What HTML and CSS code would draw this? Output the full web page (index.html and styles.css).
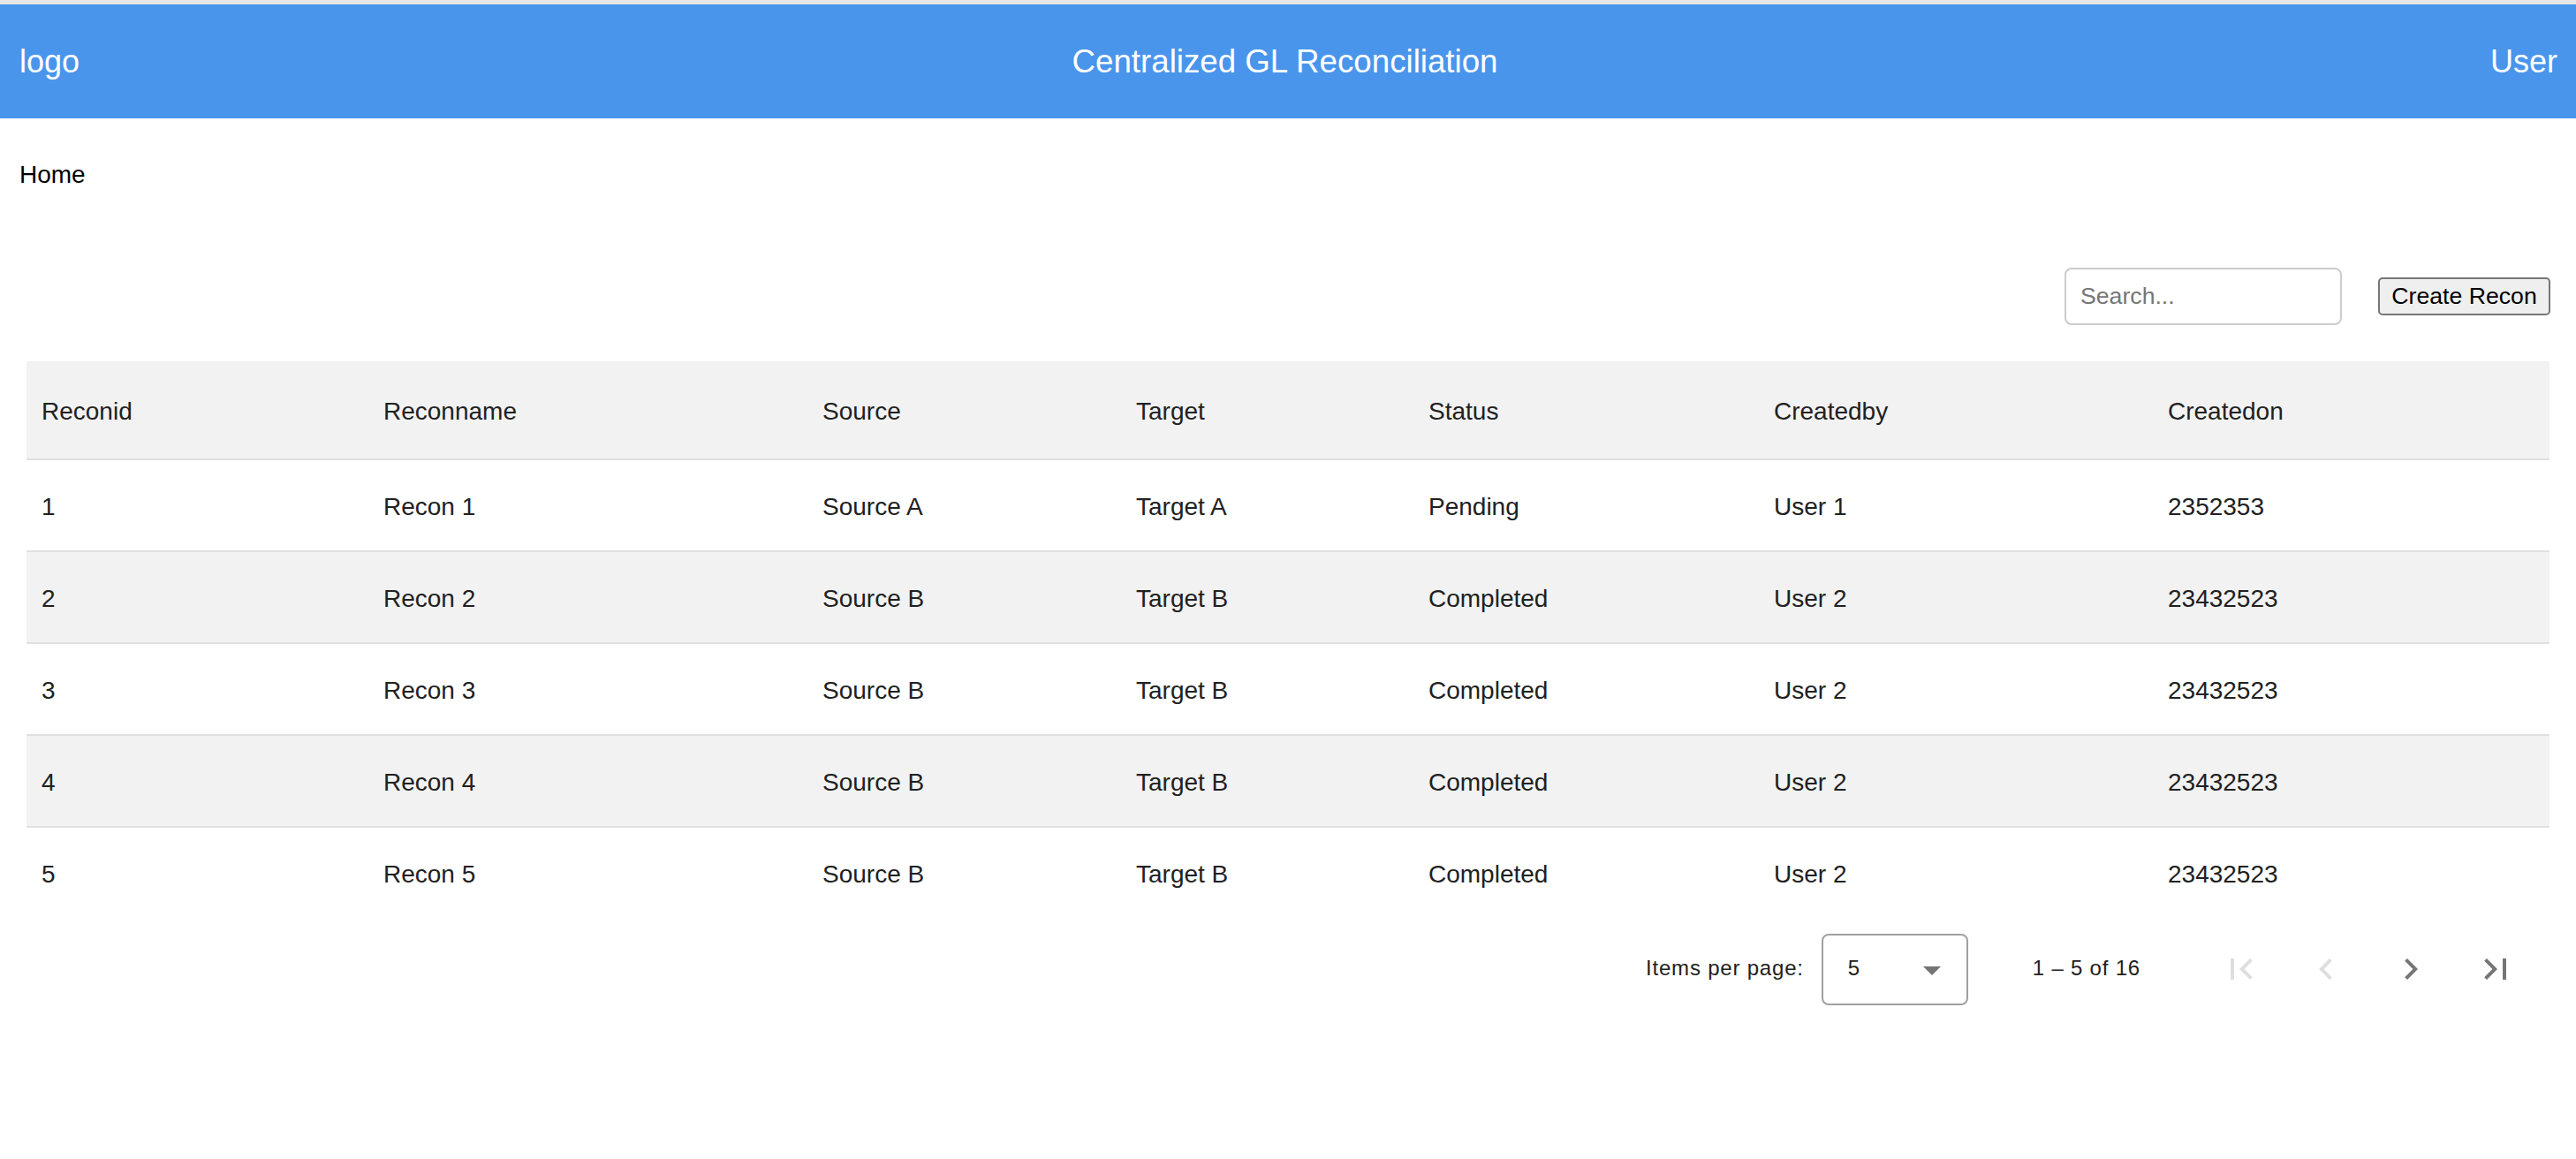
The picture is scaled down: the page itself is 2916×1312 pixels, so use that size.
FILE: index.html
```html
<!DOCTYPE html>
<html lang="en">
<head>
<meta charset="utf-8">
<title>Centralized GL Reconciliation</title>
<link rel="stylesheet" href="styles.css">
</head>
<body>
<header class="topbar">
  <span class="brand">logo</span>
  <span class="title">Centralized GL Reconciliation</span>
  <span class="user">User</span>
</header>
<nav class="crumb">Home</nav>
<div class="toolbar">
  <input class="search" type="text" placeholder="Search...">
  <button class="create" type="button">Create Recon</button>
</div>
<div class="table-wrap">
  <table class="grid">
    <colgroup>
      <col class="c1"><col class="c2"><col class="c3"><col class="c4"><col class="c5"><col class="c6"><col class="c7">
    </colgroup>
    <thead>
      <tr class="head"><th>Reconid</th><th>Reconname</th><th>Source</th><th>Target</th><th>Status</th><th>Createdby</th><th>Createdon</th></tr>
    </thead>
    <tbody>
      <tr><td>1</td><td>Recon 1</td><td>Source A</td><td>Target A</td><td>Pending</td><td>User 1</td><td>2352353</td></tr>
      <tr class="alt"><td>2</td><td>Recon 2</td><td>Source B</td><td>Target B</td><td>Completed</td><td>User 2</td><td>23432523</td></tr>
      <tr><td>3</td><td>Recon 3</td><td>Source B</td><td>Target B</td><td>Completed</td><td>User 2</td><td>23432523</td></tr>
      <tr class="alt"><td>4</td><td>Recon 4</td><td>Source B</td><td>Target B</td><td>Completed</td><td>User 2</td><td>23432523</td></tr>
      <tr class="last"><td>5</td><td>Recon 5</td><td>Source B</td><td>Target B</td><td>Completed</td><td>User 2</td><td>23432523</td></tr>
    </tbody>
  </table>
  <div class="paginator">
    <span class="pg-label">Items per page:</span>
    <div class="pg-select">
      <span class="pg-value">5</span>
      <span class="pg-arrow"></span>
    </div>
    <span class="pg-range">1 – 5 of 16</span>
    <div class="pg-buttons">
      <span class="pg-btn disabled"><svg viewBox="0 0 24 24" width="48" height="48"><path d="M18.41 16.59L13.82 12l4.59-4.59L17 6l-6 6 6 6zM6 6h2v12H6z"/></svg></span>
      <span class="pg-btn disabled"><svg viewBox="0 0 24 24" width="48" height="48"><path d="M15.41 7.41L14 6l-6 6 6 6 1.41-1.41L10.83 12z"/></svg></span>
      <span class="pg-btn"><svg viewBox="0 0 24 24" width="48" height="48"><path d="M10 6L8.59 7.41 13.17 12l-4.58 4.59L10 18l6-6z"/></svg></span>
      <span class="pg-btn"><svg viewBox="0 0 24 24" width="48" height="48"><path d="M5.59 7.41L10.18 12l-4.59 4.59L7 18l6-6-6-6zM16 6h2v12h-2z"/></svg></span>
    </div>
  </div>
</div>
</body>
</html>
```
FILE: styles.css
```css
html, body {
  margin: 0;
  padding: 0;
  background: #ffffff;
}
body {
  border-top: 5px solid #e6e6e6;
  font-family: "Liberation Sans", Arial, Helvetica, sans-serif;
  color: #000;
}
.topbar {
  height: 129px;
  background: #4a95ec;
  color: #ffffff;
  display: flex;
  align-items: center;
  justify-content: space-between;
  padding: 0 21px 0 22px;
  font-size: 36px;
}
.title {
  font-size: 36.7px;
}
.crumb {
  margin-top: 48px;
  padding: 0 22px;
  font-size: 28px;
  line-height: 32px;
}
.toolbar {
  margin-top: 89px;
  display: flex;
  justify-content: flex-end;
  align-items: center;
  gap: 41px;
  padding-right: 29px;
}
.search {
  box-sizing: border-box;
  width: 314px;
  height: 65px;
  border: 2px solid #cccccc;
  border-radius: 8px;
  padding: 0 16px;
  font-family: "Liberation Sans", Arial, sans-serif;
  font-size: 26.67px;
  outline: none;
}
.search::placeholder {
  color: #767676;
}
.create {
  box-sizing: border-box;
  width: 195px;
  height: 43px;
  padding: 0;
  border: 2px solid #767676;
  border-radius: 5px;
  background: #efefef;
  color: #000;
  font-family: "Liberation Sans", Arial, sans-serif;
  font-size: 26.67px;
}
.table-wrap {
  margin: 41px 30px 0 30px;
}
.grid {
  width: 100%;
  table-layout: fixed;
  border-collapse: collapse;
  font-size: 28px;
  color: #212121;
}
.c1 { width: 387px; }
.c2 { width: 497px; }
.c3 { width: 355px; }
.c4 { width: 331px; }
.c5 { width: 391px; }
.c6 { width: 446px; }
.c7 { width: 449px; }
.grid th, .grid td {
  text-align: left;
  font-weight: normal;
  padding: 3px 0 0 17px;
  border-bottom: 2px solid #e0e0e0;
  white-space: nowrap;
}
.grid th {
  height: 107px;
  background: #f2f2f2;
}
.grid td {
  height: 99px;
}
.grid tr.alt td {
  background: #f2f2f2;
}
.grid tr.last td {
  border-bottom-color: transparent;
}
.paginator {
  height: 112px;
  display: flex;
  justify-content: flex-end;
  align-items: center;
  padding-right: 13px;
  font-size: 24px;
  letter-spacing: 0.8px;
  color: #212121;
}
.pg-label {
  margin-bottom: 2px;
  margin-right: 20px;
}
.pg-select {
  box-sizing: border-box;
  width: 166px;
  height: 81px;
  border: 2px solid #a0a0a0;
  border-radius: 8px;
  display: flex;
  align-items: center;
  justify-content: space-between;
  padding: 0 29px 0 28px;
}
.pg-value {
  margin-bottom: 2px;
}
.pg-arrow {
  width: 0;
  height: 0;
  border-left: 10px solid transparent;
  border-right: 10px solid transparent;
  border-top: 10px solid #757575;
  margin-top: 4px;
}
.pg-range {
  margin: 0 66px 2px 73px;
}
.pg-buttons {
  display: flex;
}
.pg-btn {
  width: 96px;
  height: 96px;
  display: flex;
  align-items: center;
  justify-content: center;
  fill: #757575;
}
.pg-btn.disabled {
  fill: #dedede;
}
```
